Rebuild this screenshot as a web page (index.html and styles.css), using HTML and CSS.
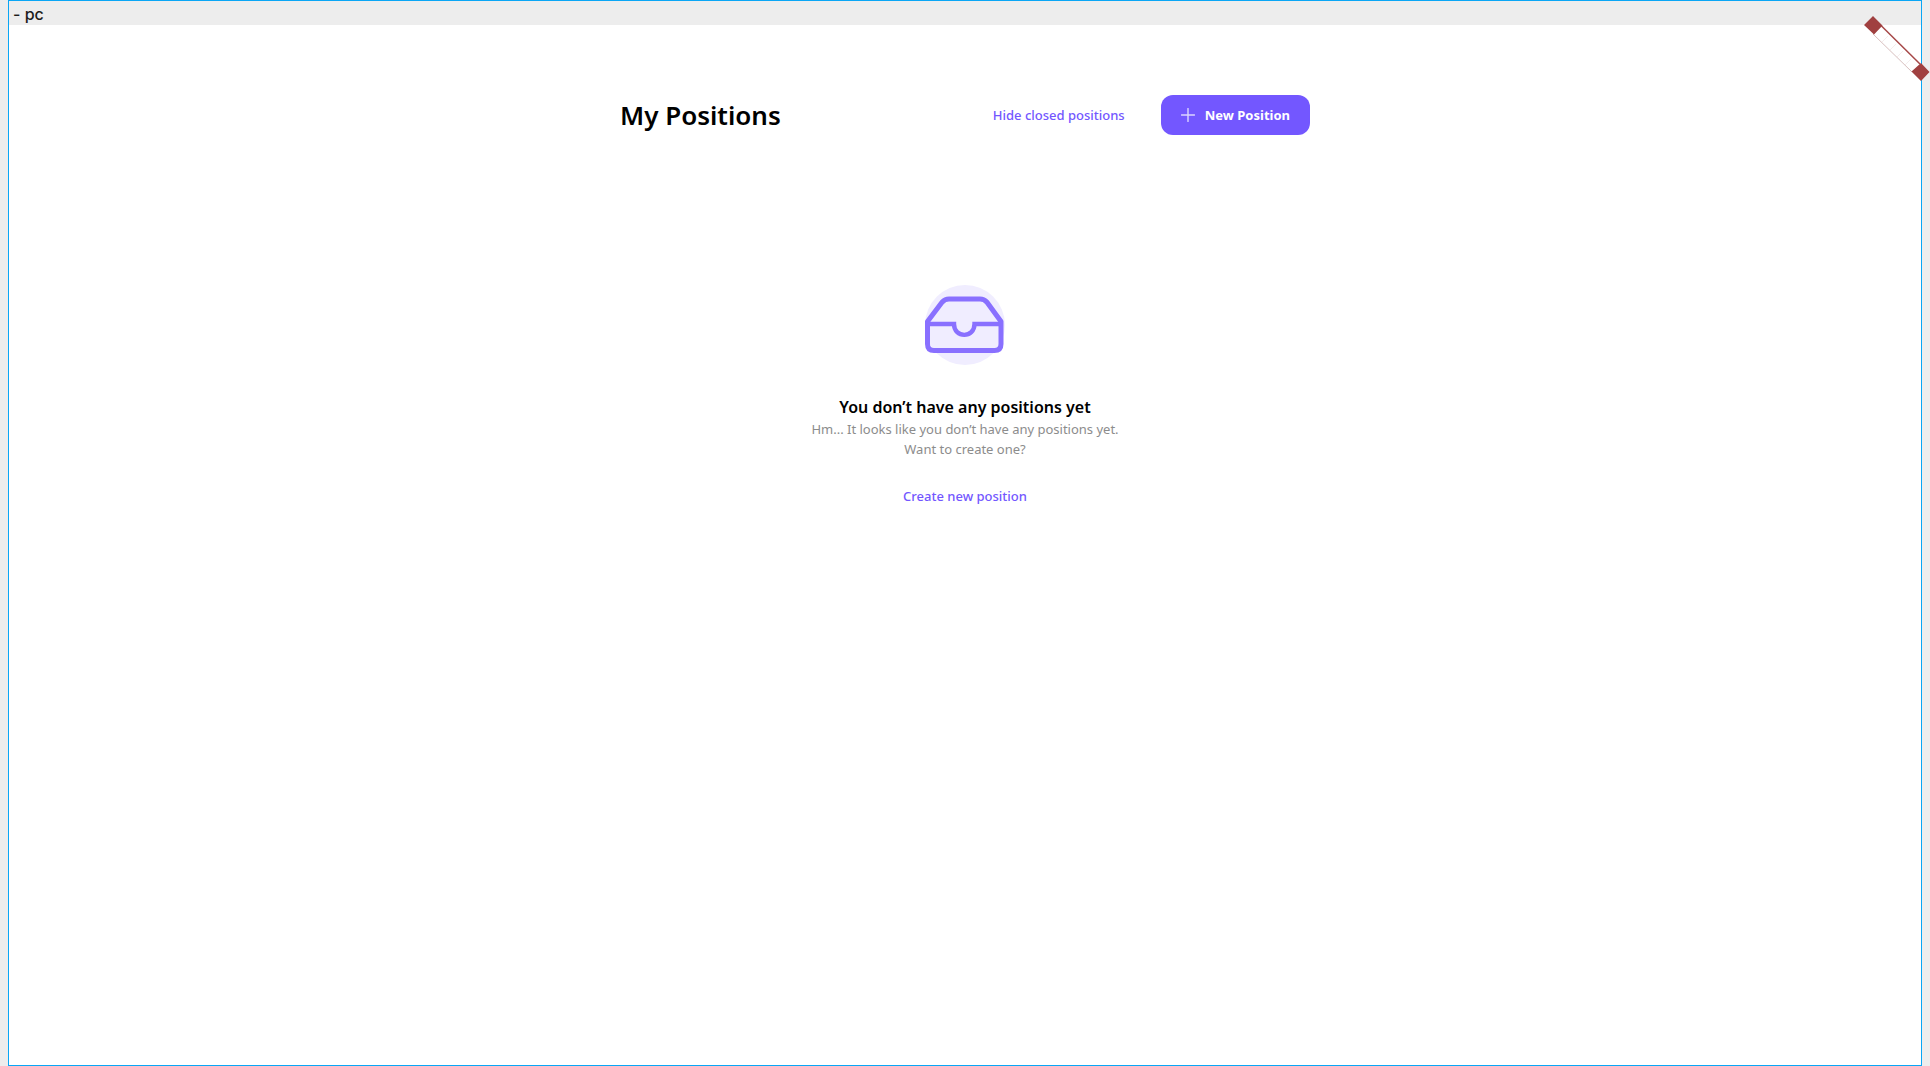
FILE: index.html
```html
<!DOCTYPE html>
<html lang="en">
<head>
  <meta charset="utf-8">
  <meta name="viewport" content="width=device-width, initial-scale=1">
  <title>My Positions</title>
  <link rel="stylesheet" href="styles.css">
</head>
<body>
  <div class="frame">
    <div class="frame-label">- pc</div>
    <main class="content">
      <header class="page-header">
        <h1 class="page-title">My Positions</h1>
        <a class="link" href="#closed">Hide closed positions</a>
        <button class="primary-button" type="button">
          <svg class="plus" viewBox="0 0 14 14" width="14" height="14" aria-hidden="true"><path d="M7 .5v13M.5 7h13" stroke="#fff" stroke-opacity=".75" stroke-width="1.4" stroke-linecap="round"/></svg>
          <span>New Position</span>
        </button>
      </header>
      <section class="empty">
        <svg class="empty-icon" viewBox="0 0 80 80" width="80" height="80" aria-hidden="true">
          <circle cx="40" cy="40" r="40" fill="#f0edff"/>
          <g fill="none" stroke="#8970ff" stroke-width="5" stroke-linejoin="round">
            <path d="M2.500 36.500 17 17.200Q20 14 24 14h31Q59 14 62 17.200L76 36.500V59Q76 65.500 69.500 65.500H9Q2.500 65.500 2.500 59Z"/>
            <path d="M3 39H29C29 53.500 49.500 53.500 49.500 39H76" stroke-width="4.400" stroke-linejoin="miter"/>
          </g>
        </svg>
        <h2 class="empty-title">You don’t have any positions yet</h2>
        <p class="empty-text">Hm... It looks like you don’t have any positions yet.<br>Want to create one?</p>
        <a class="link" href="#new">Create new position</a>
      </section>
    </main>
    <svg class="corner-mark" viewBox="0 0 66 66" width="66" height="66" aria-hidden="true">
      <path d="M17 9.500 56 48" stroke="#a64747" stroke-width="1.500"/>
      <path d="M9 18 48 56" stroke="#d8c0bf" stroke-width="1"/>
      <path d="M18 26l6-6M26 34l6-6M33 41l6-6M41 49l6-6" stroke="#f3e9e8" stroke-width=".800"/>
      <path d="M9 0 18.500 9.500 10 18.500 0 9Z M57 47 65.500 56 57 65 47.500 55.500Z" fill="#a04040"/>
    </svg>
  </div>
</body>
</html>
```
FILE: styles.css
```css
* {
  box-sizing: border-box;
}

body {
  margin: 0;
  padding: 0 8px;
  background: #ededed;
  color: #000;
  font-family: "Noto Sans", sans-serif;
  font-size: 13px;
  line-height: 20px;
}

.frame {
  position: relative;
  min-height: 100vh;
  border: 1px solid #0aa6f5;
  background: #fff;
}

.frame-label {
  height: 24px;
  padding: 1px 4px;
  background: #ededed;
  color: #1c1c1c;
  font-family: Inter, sans-serif;
  font-size: 16px;
  font-weight: 500;
  line-height: 24px;
}

.content {
  max-width: 690px;
  margin: 0 auto;
  padding: 70px 0;
}

.page-header {
  display: flex;
  align-items: center;
  gap: 36px;
}

.page-title {
  margin: 0 auto 0 0;
  font-size: 26px;
  font-weight: 600;
  line-height: 38px;
}

.link {
  color: #7357ff;
  font-weight: 500;
  text-decoration: none;
}

.primary-button {
  display: flex;
  align-items: center;
  gap: 10px;
  height: 40px;
  padding: 0 20px;
  border: 0;
  border-radius: 12px;
  background: #7357ff;
  color: #fff;
  font: inherit;
  font-weight: 700;
}

.empty {
  display: flex;
  flex-direction: column;
  align-items: center;
  padding-top: 150px;
  text-align: center;
}

.empty-title {
  margin: 32px 0 2px;
  font-size: 16px;
  font-weight: 600;
  line-height: 20px;
}

.empty-text {
  margin: 0 0 27px;
  color: #8c8c8c;
}

.corner-mark {
  position: absolute;
  top: 15px;
  right: -9px;
}
```
